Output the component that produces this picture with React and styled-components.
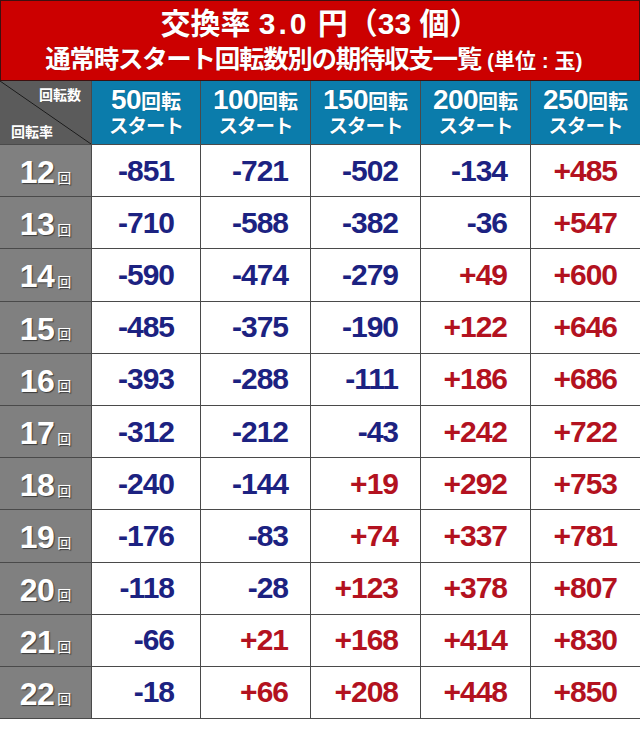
import React from 'react'
import styled, { createGlobalStyle } from 'styled-components'

const GlobalStyle = createGlobalStyle`
body{
    margin: 0;
    background: #fff;
    font-family: "Liberation Sans", "Noto Sans CJK JP", sans-serif;
}
`

const Page = styled.div`
width: 640px;
height: 731px;
background: #fff;
`

const TitleBand = styled.header`
height: 81px;
box-sizing: border-box;
padding-top: 7px;
background: #cc0000;
box-shadow: inset 0 0 0 1px #3d1010;
color: #fff;
text-align: center;
font-weight: 700;
text-shadow: 0 0 1px rgba(60, 0, 0, 0.6);
`

const TitleMain = styled.div`
font-size: 30px;
line-height: 34px;
`

const TitleSub = styled.div`
font-size: 25.5px;
line-height: 36px;
letter-spacing: -1.3px;
padding-right: 12px;
`

const Spaced = styled.span`
letter-spacing: 3px;
`

const Unit = styled.span`
font-size: 21px;
letter-spacing: 0;
margin-left: 6px;
`

const Grid = styled.div`
display: grid;
grid-template-columns: 91px 108px repeat(4, 109px);
grid-template-rows: 63px repeat(11, 51.2px);
gap: 1px;
padding-bottom: 1px;
background: #4a4a4a;
`

const Corner = styled.div`
position: relative;
background: linear-gradient(to top right, #5b5b5b calc(50% - 0.8px), #1a1a1a 50%, #5b5b5b calc(50% + 0.8px));
color: #fff;
font-weight: 700;
font-size: 14px;
`

const CornerTop = styled.span`
position: absolute;
right: 10px;
top: 3px;
`

const CornerBottom = styled.span`
position: absolute;
left: 11px;
bottom: 3px;
`

const ColHead = styled.div`
display: flex;
flex-direction: column;
align-items: center;
justify-content: center;
background: #0b7cab;
color: #fff;
font-weight: 700;
text-shadow: 0 0 1px rgba(0, 30, 60, 0.5);
`

const HeadLine = styled.div`
line-height: 24px;
font-size: ${p => p.$size || 20}px;
letter-spacing: ${p => p.$tight || 0}px;
white-space: nowrap;
`

const Big = styled.span`
font-size: 28px;
letter-spacing: -0.5px;
`

const RowLabel = styled.div`
display: flex;
align-items: center;
justify-content: center;
padding-top: 3px;
box-sizing: border-box;
background: #808080;
color: #fff;
font-weight: 700;
text-shadow: 1px 1px 1px rgba(0, 0, 0, 0.55);
`

const LabelNum = styled.span`
font-size: 32px;
line-height: 1;
letter-spacing: -0.5px;
`

const LabelUnit = styled.span`
font-size: 14px;
font-weight: 400;
margin-left: 3px;
align-self: center;
padding-top: 9px;
`

const Cell = styled.div`
display: flex;
align-items: center;
justify-content: flex-end;
padding-right: ${p => p.$pad}px;
background: #fff;
font-size: 30px;
font-weight: 700;
letter-spacing: -1px;
color: ${p => (p.$plus ? '#b3121f' : '#1c2281')};
`

const cols = [50, 100, 150, 200, 250]

const rows = [
    [12, -851, -721, -502, -134, 485],
    [13, -710, -588, -382, -36, 547],
    [14, -590, -474, -279, 49, 600],
    [15, -485, -375, -190, 122, 646],
    [16, -393, -288, -111, 186, 686],
    [17, -312, -212, -43, 242, 722],
    [18, -240, -144, 19, 292, 753],
    [19, -176, -83, 74, 337, 781],
    [20, -118, -28, 123, 378, 807],
    [21, -66, 21, 168, 414, 830],
    [22, -18, 66, 208, 448, 850],
]

const pads = [26, 22, 22, 23, 23]

function App() {
    return (
        <>
            <GlobalStyle />
            <Page>
                <TitleBand>
                    <TitleMain>
                        交換率 <Spaced>3.0</Spaced> 円（33 個）
                    </TitleMain>
                    <TitleSub>
                        通常時スタート回転数別の期待収支一覧<Unit>(単位 : 玉)</Unit>
                    </TitleSub>
                </TitleBand>
                <Grid>
                    <Corner>
                        <CornerTop>回転数</CornerTop>
                        <CornerBottom>回転率</CornerBottom>
                    </Corner>
                    {cols.map(c => (
                        <ColHead key={c}>
                            <HeadLine>
                                <Big>{c}</Big>回転
                            </HeadLine>
                            <HeadLine $size={19.5} $tight={-1}>スタート</HeadLine>
                        </ColHead>
                    ))}
                    {rows.map(([label, ...vals]) => (
                        <React.Fragment key={label}>
                            <RowLabel>
                                <LabelNum>{label}</LabelNum>
                                <LabelUnit>回</LabelUnit>
                            </RowLabel>
                            {vals.map((v, i) => (
                                <Cell key={i} $plus={v > 0} $pad={pads[i]}>
                                    {v > 0 ? `+${v}` : v}
                                </Cell>
                            ))}
                        </React.Fragment>
                    ))}
                </Grid>
            </Page>
        </>
    )
}

export default App
